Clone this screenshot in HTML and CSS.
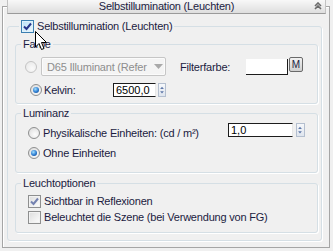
FILE: index.html
```html
<!DOCTYPE html>
<html lang="de">

<head>
    <meta charset="UTF-8">
    <title>Selbstillumination (Leuchten)</title>
    <link rel="stylesheet" href="styles.css">
</head>

<body>
    <div class="rollout">
        <div class="rollout-head">
            <span>Selbstillumination (Leuchten)</span>
            <svg class="collapse" width="8" height="8" viewBox="0 0 8 8">
                <path d="M1 4 L4 1 L7 4 M1 7 L4 4 L7 7" fill="none" stroke="#6b6b6b" stroke-width="1.6" />
            </svg>
        </div>

        <fieldset class="group outer">
            <legend>
                <span class="cb hot checked">
                    <svg viewBox="0 0 11 11"><path d="M2 5.5 L4.5 8 L9 2.5" /></svg>
                </span>
                <span class="lbl">Selbstillumination (Leuchten)</span>
            </legend>

            <!-- Farbe -->
            <fieldset class="group inner farbe">
                <legend>Farbe</legend>
                <div class="row row-combo">
                    <span class="radio disabled first"></span>
                    <div class="combo">
                        <span class="combo-text">D65 Illuminant (Refer</span>
                        <svg class="combo-arrow" width="9" height="5" viewBox="0 0 9 5">
                            <path d="M0 0 H9 L4.5 5 Z" fill="#a9a9a9" />
                        </svg>
                    </div>
                    <span class="filter-lbl">Filterfarbe:</span>
                    <span class="swatch"></span>
                    <span class="mbtn">M</span>
                </div>
                <div class="row row-kelvin">
                    <span class="radio checked kelvin"></span>
                    <span class="kelvin-lbl">Kelvin:</span>
                    <span class="field kelvin-field">6500,0</span>
                    <span class="spin">
                        <svg viewBox="0 0 8 14"><path d="M1.5 5.5 L4 2.5 L6.5 5.5 Z M1.5 8.5 L4 11.5 L6.5 8.5 Z" /></svg>
                    </span>
                </div>
            </fieldset>

            <!-- Luminanz -->
            <fieldset class="group inner lum">
                <legend>Luminanz</legend>
                <div class="row">
                    <span class="radio"></span>
                    <span class="lum-lbl">Physikalische Einheiten: (cd / m²)</span>
                    <span class="field lum-field">1,0</span>
                    <span class="spin lum-spin">
                        <svg viewBox="0 0 8 14"><path d="M1.5 5.5 L4 2.5 L6.5 5.5 Z M1.5 8.5 L4 11.5 L6.5 8.5 Z" /></svg>
                    </span>
                </div>
                <div class="row">
                    <span class="radio checked"></span>
                    <span class="lbl">Ohne Einheiten</span>
                </div>
            </fieldset>

            <!-- Leuchtoptionen -->
            <fieldset class="group inner opts">
                <legend>Leuchtoptionen</legend>
                <div class="row">
                    <span class="cb checked soft">
                        <svg viewBox="0 0 11 11"><path d="M2 5.5 L4.5 8 L9 2.5" /></svg>
                    </span>
                    <span class="lbl">Sichtbar in Reflexionen</span>
                </div>
                <div class="row">
                    <span class="cb"></span>
                    <span class="lbl">Beleuchtet die Szene (bei Verwendung von FG)</span>
                </div>
            </fieldset>
        </fieldset>
    </div>

    <!-- mouse pointer -->
    <svg class="cursor" width="13" height="20" viewBox="0 0 13 20">
        <path d="M0.5 0.5 L0.5 16 L4 12.5 L6.5 18.5 L9 17.5 L6.5 11.5 L11.5 11.5 Z" fill="#fff" stroke="#000" stroke-width="1" stroke-linejoin="miter" />
    </svg>
</body>

</html>
```

FILE: styles.css
```css
body {
    margin: 0;
    width: 333px;
    height: 251px;
    overflow: hidden;
    position: relative;
    background-color: #f0f0f0;
    font-family: "Liberation Sans", Arial, sans-serif;
    font-size: 11px;
    letter-spacing: -0.2px;
    color: #1b1b3f;
}

.rollout {
    margin: 6px 3px 0 2px;
    padding: 0 0 6px;
    border: 1px solid #a5a5a5;
    box-shadow: inset 1px 1px 0 #fff;
}

.rollout-head {
    margin: -7px 3px 0 4px;
    height: 13px;
    line-height: 13px;
    border: 1px solid #c2c2c2;
    border-top: none;
    border-bottom-color: #9a9a9a;
    background: linear-gradient(#f8f8f8, #dedede);
    display: flex;
    justify-content: center;
    position: relative;
}

.collapse {
    position: absolute;
    right: 3px;
    top: 2px;
}

/* group boxes */
.group {
    min-width: 0;
    margin: 0;
    padding: 0;
    border: 1px solid #d5dfe5;
    border-radius: 3px;
    box-shadow: 1px 1px 0 #fff;
}

.group legend {
    padding: 0 2px;
    line-height: 13px;
    height: 13px;
}

.outer {
    margin: 6px 7px 0 4px;
    padding-bottom: 7px;
}

.outer > legend {
    margin-left: 11px;
    display: flex;
    align-items: center;
}

.outer > legend .lbl {
    margin-left: 3px;
}

.inner {
    margin: 5px 3px 0 7px;
}

.inner legend {
    margin-left: 5px;
}

.farbe {
    padding: 6px 0 6px;
}

.lum {
    margin-top: 3px;
    padding: 5px 0 11px;
}

.opts {
    margin-top: 4px;
    padding: 3px 0 7px;
}

.row {
    display: flex;
    align-items: center;
    height: 16px;
}

.row .lbl {
    margin-left: 3px;
}

.lum .row + .row {
    margin-top: 4px;
}

/* checkbox */
.cb {
    flex: none;
    width: 13px;
    height: 13px;
    box-sizing: border-box;
    margin-left: 12px;
    border: 1px solid #8e8f8f;
    background: linear-gradient(135deg, #dcdcdc, #fdfdfd);
    box-shadow: inset 0 0 0 1px #f2f2f2;
}

.outer > legend .cb {
    margin-left: 0;
}

.cb svg {
    display: block;
    width: 11px;
    height: 11px;
}

.cb path {
    fill: none;
    stroke: #27358a;
    stroke-width: 2;
}

.cb.hot {
    border-color: #3c7fb1;
    background: linear-gradient(135deg, #b9e0f7, #eef8fe);
    box-shadow: inset 0 0 0 1px #def2fc;
}

.cb.soft path {
    stroke: #7482b0;
}

/* radio */
.radio {
    flex: none;
    width: 12px;
    height: 12px;
    box-sizing: border-box;
    margin-left: 12px;
    border: 1px solid #8e8f8f;
    border-radius: 50%;
    background: radial-gradient(circle at 60% 65%, #fdfdfd, #d8d8d8);
    display: flex;
    align-items: center;
    justify-content: center;
}

.radio.checked::after {
    content: "";
    width: 6px;
    height: 6px;
    border-radius: 50%;
    background: radial-gradient(circle at 40% 35%, #a5e2ff, #2a7ad0 55%, #123e7a);
}

.radio.disabled {
    border-color: #c4c4c4;
    background: radial-gradient(circle at 60% 65%, #fafafa, #e6e6e6);
}

/* Farbe rows */
.row-combo {
    height: 19px;
}

.radio.first {
    margin-left: 9px;
}

.combo {
    flex: none;
    width: 125px;
    height: 19px;
    box-sizing: border-box;
    margin-left: 4px;
    border: 1px solid #c6c6c6;
    border-radius: 2px;
    background: #f4f4f4;
    box-shadow: inset 0 0 0 1px #fbfbfb;
    display: flex;
    align-items: center;
}

.combo-text {
    width: 101px;
    margin-left: 5px;
    white-space: nowrap;
    color: #8e8e8e;
}

.combo-arrow {
    margin-left: 6px;
}

.filter-lbl {
    width: 66px;
    margin-left: 14px;
}

.swatch {
    width: 42px;
    height: 16px;
    box-sizing: border-box;
    background: #fff;
    border-right: 1px solid #1c1c1c;
    border-bottom: 1px solid #1c1c1c;
}

.mbtn {
    align-self: flex-start;
    width: 14px;
    height: 15px;
    box-sizing: border-box;
    margin-left: 1px;
    border: 1px solid #6a6a6a;
    border-radius: 2px;
    background: linear-gradient(#f2f2f2, #cfcfcf);
    font-size: 10px;
    line-height: 13px;
    text-align: center;
    letter-spacing: 0;
}

.row-kelvin {
    height: 14px;
    margin-top: 7px;
}

.radio.kelvin {
    margin-left: 14px;
}

.kelvin-lbl {
    width: 69px;
    margin-left: 2px;
}

/* spinner fields */
.field {
    height: 14px;
    box-sizing: border-box;
    padding-left: 2px;
    background: #fff;
    border: 1px solid #1c1c1c;
    border-right-color: #e8e8e8;
    color: #000;
    font-size: 11px;
    line-height: 12px;
    letter-spacing: 0;
}

.kelvin-field {
    width: 43px;
}

.spin {
    width: 8px;
    height: 14px;
    box-sizing: border-box;
    margin-left: 2px;
    border: 1px solid #b4bfcf;
    background: linear-gradient(#f6f8fb, #dfe5ee);
}

.spin svg {
    display: block;
    width: 6px;
    height: 12px;
}

.spin path {
    fill: #5f78a8;
}

.lum-lbl {
    width: 185px;
    margin-left: 3px;
}

.lum-field {
    width: 65px;
    align-self: flex-start;
    margin-top: -2px;
}

.lum-spin {
    align-self: flex-start;
    margin-top: -2px;
    margin-left: 3px;
    width: 9px;
}

.cursor {
    position: absolute;
    left: 35px;
    top: 31px;
}
```
